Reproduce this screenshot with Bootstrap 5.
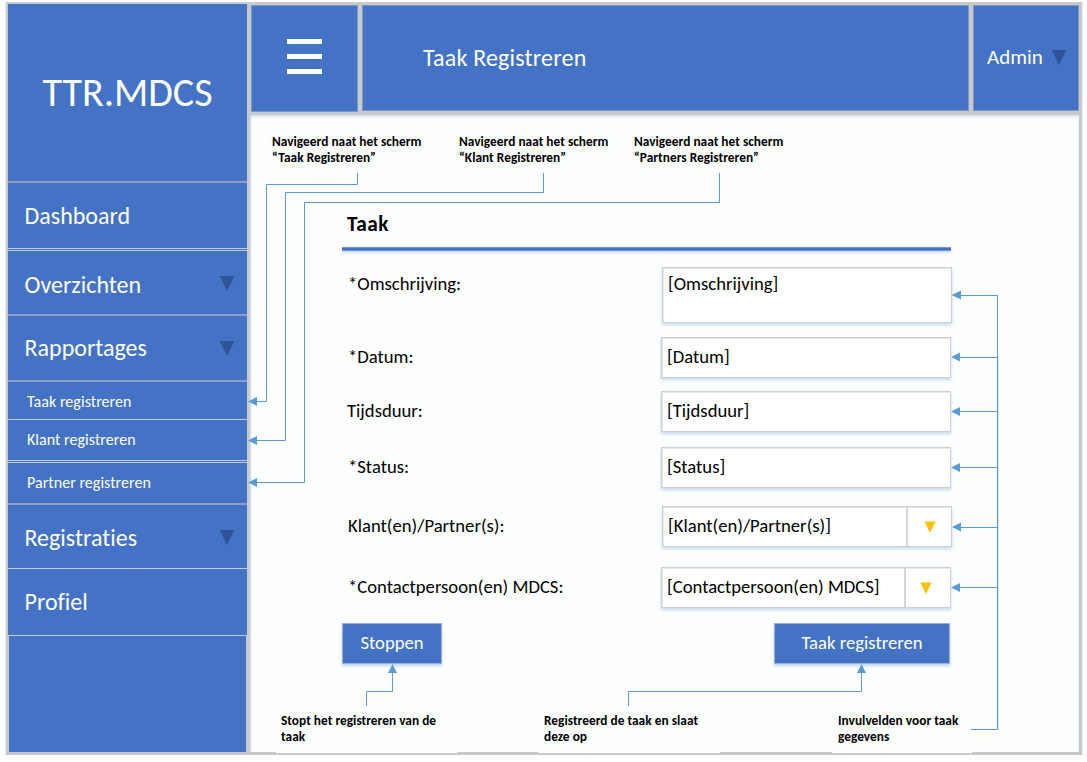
<!DOCTYPE html>
<html lang="nl">
<head>
<meta charset="utf-8">
<title>Taak Registreren</title>
<link href="https://cdn.jsdelivr.net/npm/bootstrap@5.3.0/dist/css/bootstrap.min.css" rel="stylesheet">
<style>
:root { --blue: #4472c4; --line: #c8c9ca; --edge: #8b9fc9; --wire: #5b9bd5; }
body { background: #fff; font-family: Carlito, Calibri, Lato, sans-serif; color: #000; overflow: hidden; font-variant-ligatures: none; }
.frame { width: 1076px; height: 753px; margin: 2px 0 0 6px; background: var(--line); box-shadow: 0 2px 3px rgba(91,155,213,.35); }
.side { width: 242px; padding: 2px 0 3px 2px; color: #fff; }
.side > div { background: var(--blue); width: 239px; flex: none; display: flex; align-items: center; justify-content: space-between; padding: 0 12px 0 16.5px; font-size: 24px; line-height: 1; border-bottom: 2px solid var(--edge); }
.side .brand { height: 179px; font-size: 40px; justify-content: center; padding-left: 0; padding-right: 0; padding-top: 1px; }
.side .sub-item { font-size: 16px; padding-left: 19px; letter-spacing: .04px; }
.side .split { border-bottom: 3px double #c3cbdc; }
.side .thin { border-bottom: 1px solid #c3cbdc; }
.side .filler { width: 237px; margin-left: 1px; border-bottom: 0; }
.tri { width: 16px; height: 15px; display: block; }
.cell { background: var(--blue); color: #fff; border: 1px solid #7f97c9; }
.head { height: 113px; padding: 3px 0 0 3px; }
.burger { width: 107px; height: 107px; gap: 10px; padding: 0 0 4px; }
.burger i { width: 35px; height: 5px; background: #fff; }
.title { width: 607px; height: 106px; margin-left: 4px; padding: 0 0 1px 60px; font-size: 24px; letter-spacing: .2px; }
.admin { width: 106px; height: 106px; margin: 0 0 0 4px; padding: 0 11px 0 13px; font-size: 21px; }
.admin .tri { margin-top: -2px; }
.board { background: #fdfefe; width: 829px; height: 637px; margin-left: 2px; box-shadow: inset 0 3px 3px -1px rgba(91,155,213,.25), inset 3px 0 2px -2px rgba(91,155,213,.3); }
.notes { font-size: 13.33px; font-weight: 700; line-height: 16px; letter-spacing: .03px; }
.notes.top { padding: 19px 0 0 22px; height: 51px; }
.notes.top div { width: 175px; }
.notes.top div:first-child { width: 187px; }
.task { width: 610px; margin-left: 92px; height: 547px; font-size: 18.67px; line-height: 24px; }
.task h1 { font-size: 21.33px; line-height: 26px; font-weight: 700; letter-spacing: .4px; margin: 0; padding: 45px 0 0 5px; height: 81px; }
.rule { width: 609px; height: 4px; background: var(--blue); border-top: 1px solid #7394d3; border-bottom: 1px solid #7394d3; box-shadow: 0 2px 3px rgba(91,155,213,.35); }
.line { height: 41px; padding-left: 6px; }
.line label { position: relative; top: -1px; }
.box { width: 290px; height: 41px; padding: 0 0 2px 5px; background: #fff; border: 1px solid #cdd0d2; box-shadow: 0 2px 3px rgba(91,155,213,.35), inset 1px 1px 0 #e6e8ea; }
.box.off { margin-right: 1px; }
.lift { margin-right: 2px; }
.drop { width: 45px; height: 39px; margin-bottom: -2px; border-left: 2px solid #d3d6d8; }
.act { height: 41px; border: 1px solid #9fb0d3; border-radius: 0; background: var(--blue); color: #fff; font-size: 18.67px; line-height: 24px; padding: 0 0 2px; box-shadow: 0 2px 3px rgba(91,155,213,.4); }
.foot { padding-left: 26px; }
.foot div { background: #fdfefe; height: 40px; padding-left: 5px; flex: none; }
.foot div + div { padding-left: 6px; }
.wires { left: 0; top: 0; pointer-events: none; }
</style>
</head>
<body>
<div class="frame d-flex">
  <nav class="side d-flex flex-column">
    <div class="brand">TTR.MDCS</div>
    <div style="height:68px" class="split">Dashboard</div>
    <div style="height:65px" class="pt-1">Overzichten <svg class="tri" style="margin-top:-3px"><path d="M0.5 0H15.5L8 15Z" fill="#2f5597"/></svg></div>
    <div style="height:66px">Rapportages <svg class="tri"><path d="M0.5 0H15.5L8 15Z" fill="#2f5597"/></svg></div>
    <div style="height:38px;padding-top:2px" class="sub-item thin">Taak registreren</div>
    <div style="height:43px" class="sub-item split">Klant registreren</div>
    <div style="height:42px" class="sub-item">Partner registreren</div>
    <div style="height:64px;padding-top:2px" class="thin">Registraties <svg class="tri"><path d="M0.5 0H15.5L8 15Z" fill="#2f5597"/></svg></div>
    <div style="height:67px" class="thin">Profiel</div>
    <div class="filler" style="height:116px"></div>
  </nav>
  <main class="d-flex flex-column">
    <header class="head d-flex">
      <div class="cell burger d-flex flex-column align-items-center justify-content-center"><i></i><i></i><i></i></div>
      <div class="cell title d-flex align-items-center">Taak Registreren</div>
      <div class="cell admin d-flex align-items-center justify-content-between">Admin <svg class="tri"><path d="M0.5 0H15.5L8 15Z" fill="#2f5597"/></svg></div>
    </header>
    <section class="board">
      <div class="notes top d-flex">
        <div>Navigeerd naat het scherm<br>“Taak Registreren”</div>
        <div>Navigeerd naat het scherm<br>“Klant Registreren”</div>
        <div>Navigeerd naat het scherm<br>“Partners Registreren”</div>
      </div>
      <form class="task">
        <h1>Taak</h1>
        <div class="rule"></div>
        <div class="line d-flex justify-content-between" style="height:56px;margin-top:16px"><label style="padding-top:6px">*Omschrijving:</label><div class="box h-100" style="padding-top:4px">[Omschrijving]</div></div>
        <div class="line d-flex align-items-center justify-content-between" style="margin-top:14px"><label>*Datum:</label><div class="box off d-flex align-items-center">[Datum]</div></div>
        <div class="line d-flex align-items-center justify-content-between" style="margin-top:13px"><label style="margin-left:-1px">Tijdsduur:</label><div class="box off d-flex align-items-center">[Tijdsduur]</div></div>
        <div class="line d-flex align-items-center justify-content-between" style="margin-top:15px"><label>*Status:</label><div class="box off d-flex align-items-center">[Status]</div></div>
        <div class="line d-flex align-items-center justify-content-between" style="margin-top:18px"><label>Klant(en)/Partner(s):</label><div class="box d-flex align-items-center justify-content-between">[Klant(en)/Partner(s)]<span class="drop d-flex align-items-center justify-content-center"><svg width="12" height="12"><path d="M0.5 0.5H11.5L6 12Z" fill="#ffc000"/></svg></span></div></div>
        <div class="line d-flex align-items-center justify-content-between" style="margin-top:20px"><label>*Contactpersoon(en) MDCS:</label><div class="box off d-flex align-items-center justify-content-between">[Contactpersoon(en) MDCS]<span class="drop d-flex align-items-center justify-content-center pe-1" style="width:46px"><svg width="12" height="12"><path d="M0.5 0.5H11.5L6 12Z" fill="#ffc000"/></svg></span></div></div>
        <div class="d-flex justify-content-between" style="margin-top:15px">
          <button type="button" class="btn act" style="width:100px">Stoppen</button>
          <button type="button" class="btn act lift" style="width:176px">Taak registreren</button>
        </div>
      </form>
      <div class="notes foot d-flex">
        <div style="width:181px">Stopt het registreren van de<br>taak</div>
        <div style="width:182px;margin-left:81px">Registreerd de taak en slaat<br>deze op</div>
        <div style="width:140px;margin-left:112px">Invulvelden voor taak<br>gegevens</div>
      </div>
    </section>
  </main>
</div>
<svg class="wires position-absolute" width="1087" height="762">
  <g fill="none" stroke="#5b9bd5" stroke-width="1">
    <path d="M357.5 173V184.5H266.5V401.5H256"/>
    <path d="M543.5 173V192.5H285.5V440.5H256"/>
    <path d="M719.5 173V202.5H304.5V482.5H256"/>
    <path d="M960 295.5H997.5M960 357.5H997.5M960 411.5H997.5M960 467.5H997.5M960 527.5H997.5M960 587.5H997.5M971 729.5H997.5V295"/>
    <path d="M366.5 706V691.5H392.5V672"/>
    <path d="M628.5 706V691.5H861.5V672"/>
  </g>
  <g fill="#5b9bd5">
    <path d="M248 401.5L257 397V406ZM248 440.5L257 436V445ZM248 482.5L257 478V487Z"/>
    <path d="M951.5 295L961 290.5V299.5ZM951 357L960 352.5V361.5ZM951 411.5L960 407V416ZM951 467.5L960 463V472ZM952 527L961 522.5V531.5ZM951 587.5L960 583V592Z"/>
    <path d="M392.5 664L388 673H397ZM861.5 664L857 673H866Z"/>
    <path d="M997 357H998.2V729.5H997Z"/>
  </g>
</svg>
<script src="https://cdn.jsdelivr.net/npm/bootstrap@5.3.0/dist/js/bootstrap.bundle.min.js"></script>
</body>
</html>
